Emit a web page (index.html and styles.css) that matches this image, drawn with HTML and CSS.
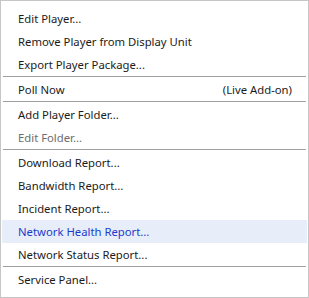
FILE: index.html
```html
<!DOCTYPE html>
<html lang="en">
<head>
  <meta charset="UTF-8">
  <title>Player Menu</title>
  <link rel="stylesheet" href="styles.css">
</head>
<body>
  <ul class="menu">
    <li class="item">Edit Player...</li>
    <li class="item">Remove Player from Display Unit</li>
    <li class="item">Export Player Package...</li>
    <li class="sep"></li>
    <li class="item"><span>Poll Now</span><span class="hint">(Live Add-on)</span></li>
    <li class="sep"></li>
    <li class="item">Add Player Folder...</li>
    <li class="item disabled">Edit Folder...</li>
    <li class="sep"></li>
    <li class="item">Download Report...</li>
    <li class="item">Bandwidth Report...</li>
    <li class="item">Incident Report...</li>
    <li class="item active">Network Health Report...</li>
    <li class="item">Network Status Report...</li>
    <li class="sep"></li>
    <li class="item">Service Panel...</li>
  </ul>
</body>
</html>
```

FILE: styles.css
```css
* {
  box-sizing: border-box;
}

body {
  margin: 0;
  background: #fff;
  font-family: "Noto Sans", "Open Sans", sans-serif;
  font-size: 11.3px;
  color: #1b1b1b;
}

.menu {
  list-style: none;
  margin: 0;
  width: 309px;
  height: 298px;
  padding: 6px 1px;
  border: 1px solid #c6c6c6;
  background: #fff;
}

.item {
  display: flex;
  align-items: center;
  justify-content: space-between;
  height: 23px;
  padding: 0 15px 0 16px;
  white-space: nowrap;
}

.item.disabled {
  color: #6d6d6d;
}

.item.active {
  background: #e8eef9;
  color: #1a3ccc;
}

.sep {
  height: 2px;
  margin: 0 1px;
  border-top: 1px solid #a0a0a0;
}
```
